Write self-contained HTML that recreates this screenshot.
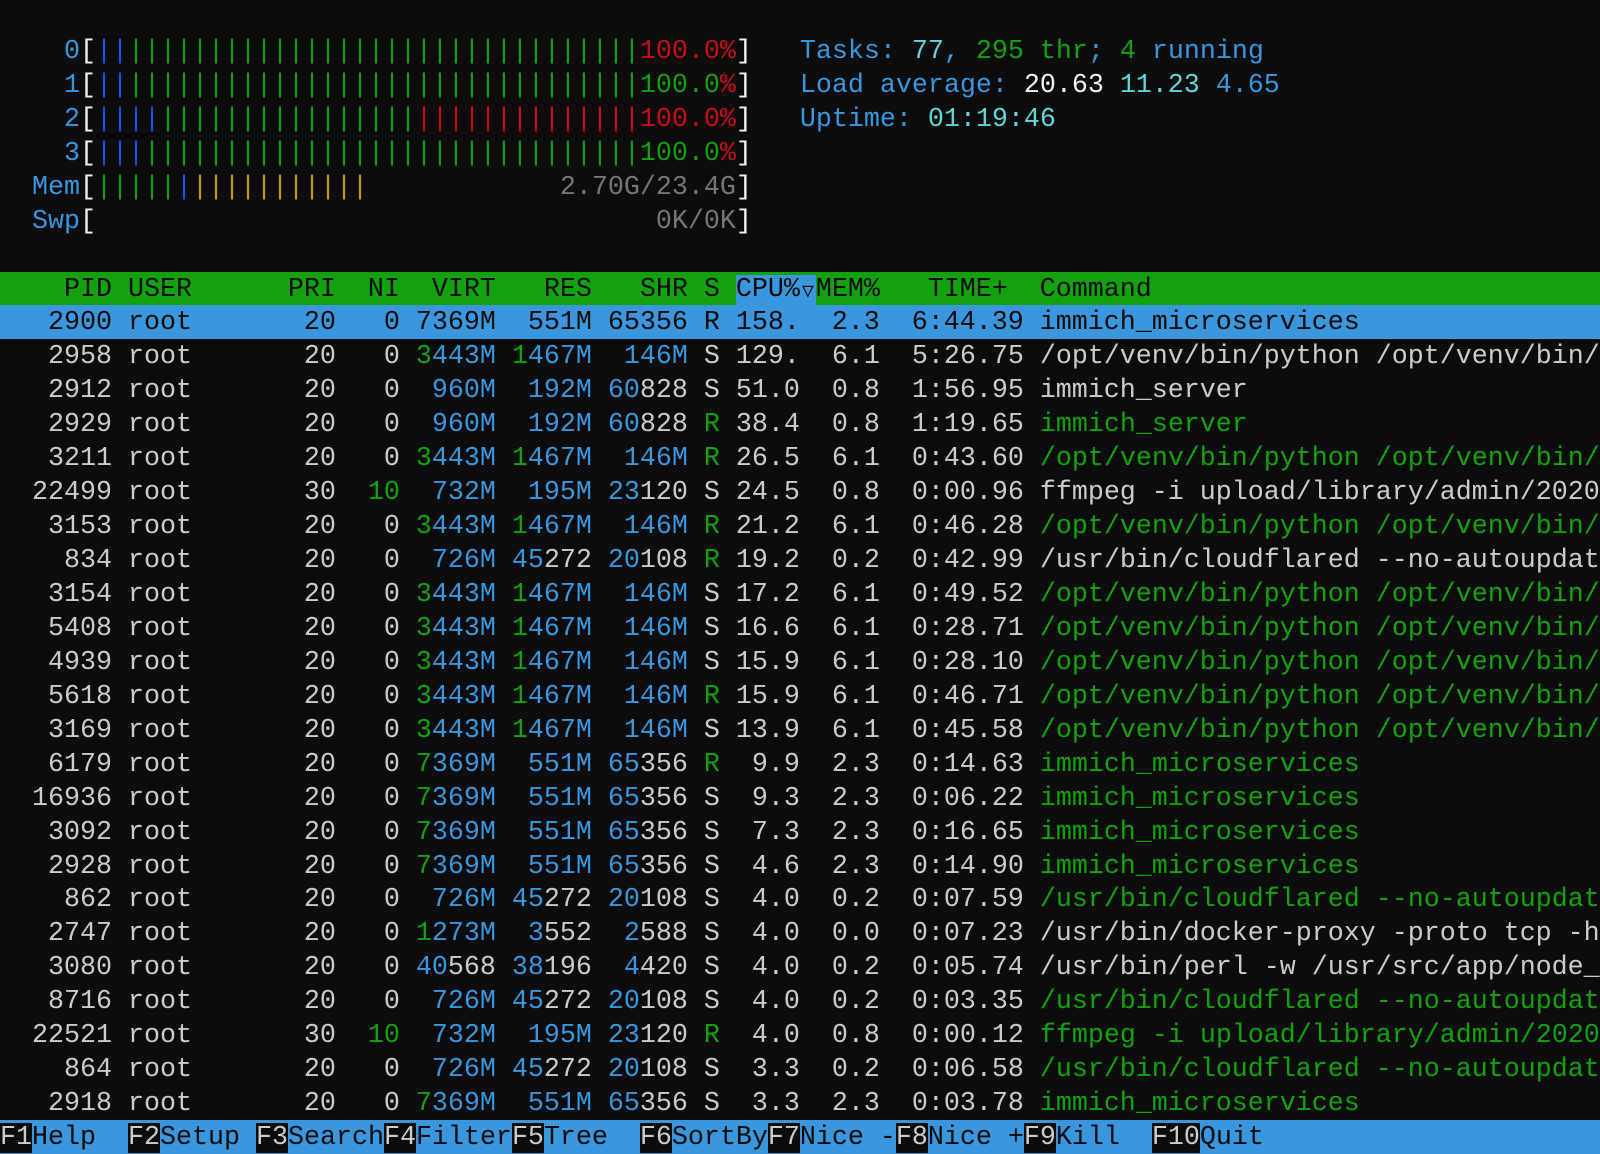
<!DOCTYPE html>
<html><head><meta charset="utf-8">
<style>
html,body{margin:0;padding:0;background:#0c0c0c;}
body{width:1600px;height:1154px;overflow:hidden;position:relative;
font-family:"Liberation Mono","DejaVu Sans Mono",monospace;font-size:26.67px;color:#cccccc;}
.row{position:absolute;left:0;width:1600px;height:33.94px;line-height:33.94px;white-space:pre;overflow:hidden;padding-top:2px;box-sizing:border-box;}
.c{color:#3a96dd}.g{color:#13a10e}.r{color:#c50f1f}.y{color:#c19c00}.B{color:#1e50e6}
.k{color:#767676}.lc{color:#61d6d6}.wb{color:#f2f2f2}.br{color:#f2f2f2}
.hdr{background:#13a10e;color:#0c0c0c}
.sel{background:#3a96dd;color:#0c0c0c}
.sel span{color:#0c0c0c}
.tri{display:inline-block;width:16px;text-align:center;font-family:"DejaVu Sans Mono",monospace;font-size:20px;vertical-align:top}
.fb{background:#3a96dd;color:#0c0c0c}
.fk{background:#0c0c0c;color:#cccccc}
</style></head><body>
<div class="row" style="top:33.94px">    <span class="c">0</span><span class="br">[</span><span class="B">||</span><span class="g">||||||||||||||||||||||||||||||||</span><span class="r">100.0%</span><span class="br">]</span>   <span class="c">Tasks: </span><span class="lc">77</span><span class="c">, </span><span class="g">295 thr</span><span class="c">; </span><span class="g">4</span><span class="c"> running</span></div>
<div class="row" style="top:67.88px">    <span class="c">1</span><span class="br">[</span><span class="B">||</span><span class="g">||||||||||||||||||||||||||||||||</span><span class="g">100.0</span><span class="r">%</span><span class="br">]</span>   <span class="c">Load average: </span><span class="wb">20.63 </span><span class="lc">11.23 </span><span class="c">4.65</span></div>
<div class="row" style="top:101.82px">    <span class="c">2</span><span class="br">[</span><span class="B">||||</span><span class="g">||||||||||||||||</span><span class="r">||||||||||||||</span><span class="r">100.0%</span><span class="br">]</span>   <span class="c">Uptime: </span><span class="lc">01:19:46</span></div>
<div class="row" style="top:135.76px">    <span class="c">3</span><span class="br">[</span><span class="B">|||</span><span class="g">|||||||||||||||||||||||||||||||</span><span class="g">100.0</span><span class="r">%</span><span class="br">]</span></div>
<div class="row" style="top:169.7px">  <span class="c">Mem</span><span class="br">[</span><span class="g">|||||</span><span class="B">|</span><span class="y">|||||||||||</span>            <span class="k">2.70G/23.4G</span><span class="br">]</span></div>
<div class="row" style="top:203.64px">  <span class="c">Swp</span><span class="br">[</span>                                   <span class="k">0K/0K</span><span class="br">]</span></div>

<div class="row hdr" style="top:271.52px">    PID USER      PRI  NI  VIRT   RES   SHR S <span class="sel">CPU%<span class="tri">▽</span></span>MEM%   TIME+  Command                                   </div>

<div class="row sel" style="top:305.46px">   2900 root       20   0 7369M  551M 65356 R 158.  2.3  6:44.39 immich_microservices</div>
<div class="row" style="top:339.4px">   2958 root       20   0 <span class="g">3</span><span class="c">443M</span> <span class="g">1</span><span class="c">467M</span>  <span class="c">146M</span> S 129.  6.1  5:26.75 /opt/venv/bin/python /opt/venv/bin/</div>
<div class="row" style="top:373.34px">   2912 root       20   0  <span class="c">960M</span>  <span class="c">192M</span> <span class="c">60</span>828 S 51.0  0.8  1:56.95 immich_server</div>
<div class="row" style="top:407.28px">   2929 root       20   0  <span class="c">960M</span>  <span class="c">192M</span> <span class="c">60</span>828 <span class="g">R</span> 38.4  0.8  1:19.65 <span class="g">immich_server</span></div>
<div class="row" style="top:441.22px">   3211 root       20   0 <span class="g">3</span><span class="c">443M</span> <span class="g">1</span><span class="c">467M</span>  <span class="c">146M</span> <span class="g">R</span> 26.5  6.1  0:43.60 <span class="g">/opt/venv/bin/python /opt/venv/bin/</span></div>
<div class="row" style="top:475.16px">  22499 root       30  <span class="g">10</span>  <span class="c">732M</span>  <span class="c">195M</span> <span class="c">23</span>120 S 24.5  0.8  0:00.96 ffmpeg -i upload/library/admin/2020</div>
<div class="row" style="top:509.1px">   3153 root       20   0 <span class="g">3</span><span class="c">443M</span> <span class="g">1</span><span class="c">467M</span>  <span class="c">146M</span> <span class="g">R</span> 21.2  6.1  0:46.28 <span class="g">/opt/venv/bin/python /opt/venv/bin/</span></div>
<div class="row" style="top:543.04px">    834 root       20   0  <span class="c">726M</span> <span class="c">45</span>272 <span class="c">20</span>108 <span class="g">R</span> 19.2  0.2  0:42.99 /usr/bin/cloudflared --no-autoupdat</div>
<div class="row" style="top:576.98px">   3154 root       20   0 <span class="g">3</span><span class="c">443M</span> <span class="g">1</span><span class="c">467M</span>  <span class="c">146M</span> S 17.2  6.1  0:49.52 <span class="g">/opt/venv/bin/python /opt/venv/bin/</span></div>
<div class="row" style="top:610.92px">   5408 root       20   0 <span class="g">3</span><span class="c">443M</span> <span class="g">1</span><span class="c">467M</span>  <span class="c">146M</span> S 16.6  6.1  0:28.71 <span class="g">/opt/venv/bin/python /opt/venv/bin/</span></div>
<div class="row" style="top:644.86px">   4939 root       20   0 <span class="g">3</span><span class="c">443M</span> <span class="g">1</span><span class="c">467M</span>  <span class="c">146M</span> S 15.9  6.1  0:28.10 <span class="g">/opt/venv/bin/python /opt/venv/bin/</span></div>
<div class="row" style="top:678.8px">   5618 root       20   0 <span class="g">3</span><span class="c">443M</span> <span class="g">1</span><span class="c">467M</span>  <span class="c">146M</span> <span class="g">R</span> 15.9  6.1  0:46.71 <span class="g">/opt/venv/bin/python /opt/venv/bin/</span></div>
<div class="row" style="top:712.74px">   3169 root       20   0 <span class="g">3</span><span class="c">443M</span> <span class="g">1</span><span class="c">467M</span>  <span class="c">146M</span> S 13.9  6.1  0:45.58 <span class="g">/opt/venv/bin/python /opt/venv/bin/</span></div>
<div class="row" style="top:746.68px">   6179 root       20   0 <span class="g">7</span><span class="c">369M</span>  <span class="c">551M</span> <span class="c">65</span>356 <span class="g">R</span>  9.9  2.3  0:14.63 <span class="g">immich_microservices</span></div>
<div class="row" style="top:780.62px">  16936 root       20   0 <span class="g">7</span><span class="c">369M</span>  <span class="c">551M</span> <span class="c">65</span>356 S  9.3  2.3  0:06.22 <span class="g">immich_microservices</span></div>
<div class="row" style="top:814.56px">   3092 root       20   0 <span class="g">7</span><span class="c">369M</span>  <span class="c">551M</span> <span class="c">65</span>356 S  7.3  2.3  0:16.65 <span class="g">immich_microservices</span></div>
<div class="row" style="top:848.5px">   2928 root       20   0 <span class="g">7</span><span class="c">369M</span>  <span class="c">551M</span> <span class="c">65</span>356 S  4.6  2.3  0:14.90 <span class="g">immich_microservices</span></div>
<div class="row" style="top:882.44px">    862 root       20   0  <span class="c">726M</span> <span class="c">45</span>272 <span class="c">20</span>108 S  4.0  0.2  0:07.59 <span class="g">/usr/bin/cloudflared --no-autoupdat</span></div>
<div class="row" style="top:916.38px">   2747 root       20   0 <span class="g">1</span><span class="c">273M</span>  <span class="c">3</span>552  <span class="c">2</span>588 S  4.0  0.0  0:07.23 /usr/bin/docker-proxy -proto tcp -h</div>
<div class="row" style="top:950.32px">   3080 root       20   0 <span class="c">40</span>568 <span class="c">38</span>196  <span class="c">4</span>420 S  4.0  0.2  0:05.74 /usr/bin/perl -w /usr/src/app/node_</div>
<div class="row" style="top:984.26px">   8716 root       20   0  <span class="c">726M</span> <span class="c">45</span>272 <span class="c">20</span>108 S  4.0  0.2  0:03.35 <span class="g">/usr/bin/cloudflared --no-autoupdat</span></div>
<div class="row" style="top:1018.2px">  22521 root       30  <span class="g">10</span>  <span class="c">732M</span>  <span class="c">195M</span> <span class="c">23</span>120 <span class="g">R</span>  4.0  0.8  0:00.12 <span class="g">ffmpeg -i upload/library/admin/2020</span></div>
<div class="row" style="top:1052.14px">    864 root       20   0  <span class="c">726M</span> <span class="c">45</span>272 <span class="c">20</span>108 S  3.3  0.2  0:06.58 <span class="g">/usr/bin/cloudflared --no-autoupdat</span></div>
<div class="row" style="top:1086.08px">   2918 root       20   0 <span class="g">7</span><span class="c">369M</span>  <span class="c">551M</span> <span class="c">65</span>356 S  3.3  2.3  0:03.78 <span class="g">immich_microservices</span></div>

<div class="row fb" style="top:1120.02px;height:34px"><span class="fk">F1</span>Help  <span class="fk">F2</span>Setup <span class="fk">F3</span>Search<span class="fk">F4</span>Filter<span class="fk">F5</span>Tree  <span class="fk">F6</span>SortBy<span class="fk">F7</span>Nice -<span class="fk">F8</span>Nice +<span class="fk">F9</span>Kill  <span class="fk">F10</span>Quit                            </div>
</body></html>
